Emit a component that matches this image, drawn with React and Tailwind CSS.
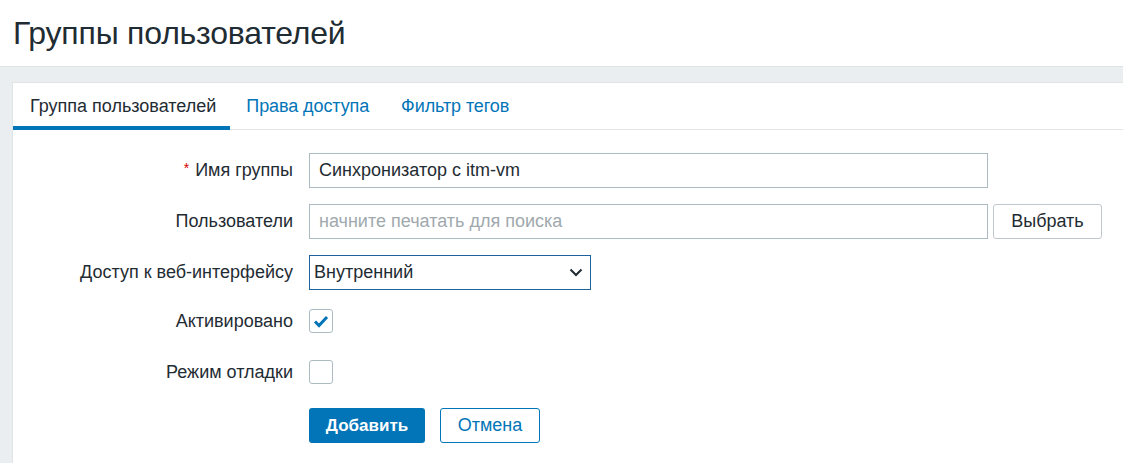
import { useState } from "react";

const Label = ({ children, required }) => (
  <div className="w-[280px] shrink-0 pr-0 text-right text-[18px] text-[#1f2c33]">
    {required && <span className="text-[#d40000] text-[14px] relative -top-[3px] mr-[6px]">*</span>}
    {children}
  </div>
);

const Checkbox = ({ checked, onClick }) => (
  <button
    onClick={onClick}
    className="w-[24px] h-[24px] rounded-[3px] border border-[#acbbc2] bg-white flex items-center justify-center"
  >
    {checked && (
      <svg width="16" height="13" viewBox="0 0 16 13">
        <polyline points="2,6.5 6,10.5 14,2" fill="none" stroke="#0275b8" strokeWidth="3" />
      </svg>
    )}
  </button>
);

export default function App() {
  const [active, setActive] = useState(true);
  const [debug, setDebug] = useState(false);
  const tabs = ["Группа пользователей", "Права доступа", "Фильтр тегов"];

  return (
    <div className="min-h-[463px] flex flex-col bg-[#ebeef0] font-['Liberation_Sans',Arial,sans-serif]">
      <div className="h-[67px] shrink-0 bg-white border-b border-[#dfe4e7] px-[13px] pt-[13px]">
        <h1 className="text-[32px] leading-[40px] text-[#1f2c33] tracking-[-0.2px]">Группы пользователей</h1>
      </div>
      <div className="flex-1 flex pl-[12px] pt-[15px]">
        <div className="flex-1 bg-white border-l border-t border-[#dfe4e7]">
          <div className="flex h-[47px] border-b border-[#e2e6e8]">
            {tabs.map((t, i) => (
              <div
                key={t}
                className={
                  i === 0
                    ? "pl-[17px] pr-[14px] pt-[10px] text-[18px] text-[#1f2c33] border-b-4 border-[#0275b8] mb-[-1px]"
                    : "px-[16px] pt-[10px] text-[18px] tracking-[-0.1px] text-[#0275b8]"
                }
              >
                {t}
              </div>
            ))}
          </div>

          <div className="flex flex-col pt-[23px]">
            <div className="flex items-center gap-[16px] h-[35px]">
              <Label required>Имя группы</Label>
              <input
                defaultValue="Синхронизатор с itm-vm"
                className="w-[679px] h-[35px] border border-[#acbbc2] px-[9px] text-[18px] text-[#1f2c33] outline-none"
              />
            </div>
            <div className="flex items-center gap-[16px] h-[35px] mt-[16px]">
              <Label>Пользователи</Label>
              <div className="flex gap-[5px]">
                <input
                  placeholder="начните печатать для поиска"
                  className="w-[679px] h-[35px] border border-[#acbbc2] px-[9px] text-[18px] text-[#1f2c33] placeholder:text-[#a0a9ae] outline-none"
                />
                <button className="w-[109px] h-[35px] border border-[#bfc8cd] rounded-[3px] text-[18px] text-[#1f2c33] bg-white">
                  Выбрать
                </button>
              </div>
            </div>
            <div className="flex items-center gap-[16px] h-[35px] mt-[16px]">
              <Label>Доступ к веб-интерфейсу</Label>
              <div className="w-[282px] h-[35px] border border-[#1f62a0] flex items-center justify-between pl-[4px] pr-[7px] text-[18px] text-[#1f2c33]">
                <span>Внутренний</span>
                <svg width="14" height="9" viewBox="0 0 14 9">
                  <polyline points="1.5,1.5 7,7 12.5,1.5" fill="none" stroke="#1f2c33" strokeWidth="2" />
                </svg>
              </div>
            </div>
            <div className="flex items-center gap-[16px] h-[30px] mt-[16px]">
              <Label>Активировано</Label>
              <Checkbox checked={active} onClick={() => setActive(!active)} />
            </div>
            <div className="flex items-center gap-[16px] h-[30px] mt-[21px]">
              <Label>Режим отладки</Label>
              <Checkbox checked={debug} onClick={() => setDebug(!debug)} />
            </div>
            <div className="flex items-center gap-[16px] h-[35px] mt-[21px]">
              <div className="w-[280px] shrink-0" />
              <div className="flex gap-[15px]">
                <button className="w-[116px] h-[35px] rounded-[3px] bg-[#0275b8] text-white font-bold text-[17px]">
                  Добавить
                </button>
                <button className="w-[100px] h-[35px] rounded-[3px] border border-[#0275b8] bg-white text-[#0275b8] text-[18px]">
                  Отмена
                </button>
              </div>
            </div>
          </div>
        </div>
      </div>
    </div>
  );
}
